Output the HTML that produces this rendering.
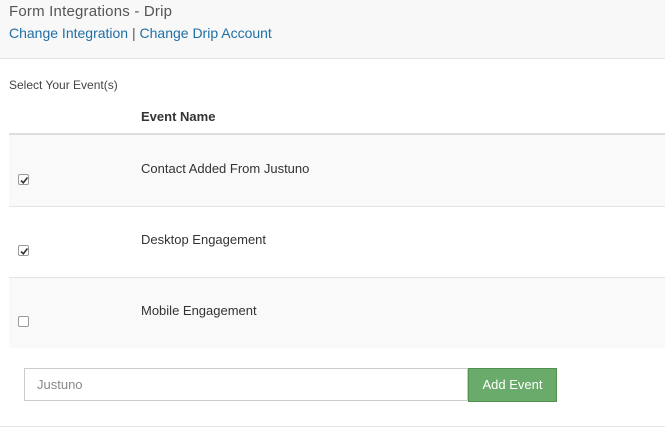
<!DOCTYPE html>
<html><head><style>
body{margin:0;width:665px;height:437px;background:#fff;font-family:"Liberation Sans",sans-serif;position:relative;overflow:hidden}
.hd{position:absolute;left:0;top:0;width:665px;height:58px;background:#f8f8f8;border-bottom:1px solid #e5e5e5}
.t1{position:absolute;left:9px;top:3px;font-size:15px;color:#555;letter-spacing:0.2px}
.t2{position:absolute;left:9px;top:25px;font-size:14px;color:#1f6fa5}
.t2 span{color:#555}
.sel{position:absolute;left:9px;top:78px;font-size:12px;color:#444}
.th{position:absolute;left:141px;top:109px;font-size:13px;font-weight:bold;color:#333}
.hl{position:absolute;left:9px;top:133px;width:656px;height:2px;background:#ddd}
.row{position:absolute;left:9px;width:656px;height:70px;border-top:1px solid #e3e3e3}
.row .n{position:absolute;left:132px;top:25px;font-size:13px;color:#333}
.cb{position:absolute;left:9px;top:38px;width:11px;height:11px;border:1px solid #999;border-radius:2px;background:#fff;box-sizing:border-box}
.cb svg{position:absolute;left:0;top:0}
.inp{position:absolute;left:24px;top:368px;width:444px;height:33px;border:1px solid #ccc;box-sizing:border-box;font-size:13px;color:#888;padding:8px 12px}
.btn{position:absolute;left:468px;top:368px;width:89px;height:34px;background:#6aaa6b;border:1px solid #4e944f;box-sizing:border-box;color:#fff;font-size:13px;text-align:center;line-height:31px}
.bl{position:absolute;left:0;top:426px;width:665px;height:1px;background:#e5e5e5}
</style></head><body>
<div class="hd"><div class="t1">Form Integrations - Drip</div><div class="t2">Change Integration <span>|</span> Change Drip Account</div></div>
<div class="sel">Select Your Event(s)</div>
<div class="th">Event Name</div>
<div class="hl"></div>
<div class="row" style="top:135px;height:71px;background:#f9f9f9;border-top:none"><div class="cb" style="top:39px"><svg width="11" height="11"><path d="M2 5.5L4.3 7.8L8.5 2.5" stroke="#333" stroke-width="1.6" fill="none"/></svg></div><div class="n" style="top:26px">Contact Added From Justuno</div></div>
<div class="row" style="top:206px"><div class="cb"><svg width="11" height="11"><path d="M2 5.5L4.3 7.8L8.5 2.5" stroke="#333" stroke-width="1.6" fill="none"/></svg></div><div class="n">Desktop Engagement</div></div>
<div class="row" style="top:277px;background:#f9f9f9"><div class="cb"></div><div class="n">Mobile Engagement</div></div>
<div class="inp">Justuno</div>
<div class="btn">Add Event</div>
<div class="bl"></div>
</body></html>
